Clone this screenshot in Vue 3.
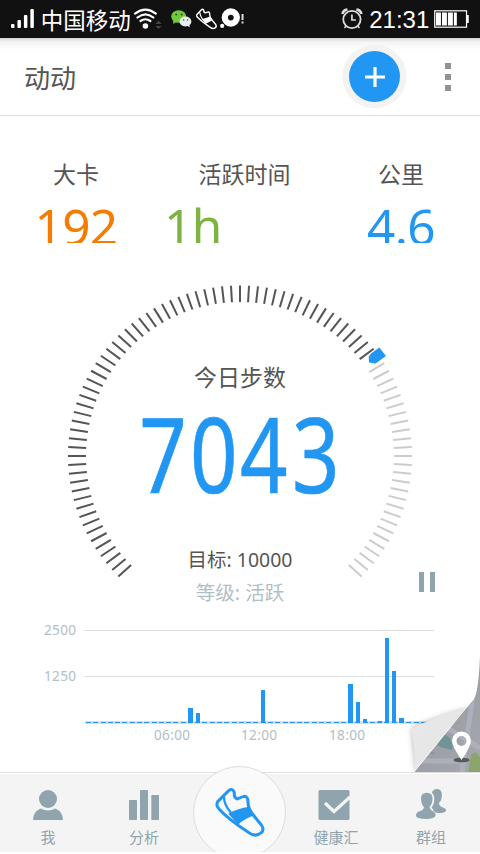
<script setup>
const stats = [
  { label: '大卡', value: '192', tone: 'orange' },
  { label: '活跃时间', value: '1h', tone: 'green' },
  { label: '公里', value: '4.6', tone: 'blue' },
]

const ticks = Array.from({ length: 91 }, (_, i) => {
  const deg = 225 - i * 3
  const a = (deg * Math.PI) / 180
  const c = Math.cos(a)
  const s = Math.sin(a)
  return { x1: 180 + 154 * c, y1: 176 - 154 * s, x2: 180 + 172 * c, y2: 176 - 170.5 * s, deg }
}).filter((t) => t.deg !== 36)

const dashes = Array.from({ length: 48 }, (_, i) => Math.round(86 + i * 7.28))

const bars = [
  { x: 188, w: 5, h: 15 },
  { x: 196, w: 4, h: 10 },
  { x: 261, w: 4, h: 33 },
  { x: 348, w: 5, h: 39 },
  { x: 356, w: 4, h: 21 },
  { x: 363, w: 4, h: 4 },
  { x: 378, w: 4, h: 2 },
  { x: 385, w: 4, h: 85 },
  { x: 392, w: 4, h: 52 },
  { x: 399, w: 5, h: 5 },
]
</script>

<template>
  <div class="screen">
    <div class="status">
      <svg class="signal" width="24" height="20" viewBox="0 0 24 20" fill="#fff">
        <rect x="0" y="15" width="3.5" height="4" rx="1" /><rect x="6.5" y="11" width="3.5" height="8" rx="1" />
        <rect x="13" y="6" width="3.5" height="13" rx="1" /><rect x="19.5" y="0" width="3.5" height="19" rx="1" />
      </svg>
      <span class="carrier">中国移动</span>
      <svg class="tray" width="114" height="24" viewBox="134 7 114 24" fill="none">
        <g stroke="#fff" stroke-width="2.2" stroke-linecap="round">
          <path d="M136 13.5Q146.500 5.500 157 13.500M138.500 17.500Q146.500 11 154.500 17.500M141.500 21Q146.500 17.500 151.500 21" />
        </g>
        <circle cx="146.500" cy="26" r="2.800" fill="#fff" />
        <path d="M156.500 24l3.200-3.500 3.200 3.500zM156.500 26l3.200 3 3.200-3z" fill="#444" />
        <ellipse cx="180" cy="16.500" rx="7.500" ry="6.300" fill="#70cb38" />
        <path d="M174.500 20l0 4 4-2.500z" fill="#70cb38" />
        <circle cx="177.500" cy="14.500" r="1" fill="#234b16" /><circle cx="183" cy="14.500" r="1" fill="#234b16" />
        <ellipse cx="186.800" cy="21.500" rx="6" ry="5" fill="#e7edf0" /><path d="M188 25l3 2.500-.2-4z" fill="#e7edf0" />
        <circle cx="185" cy="20" r=".8" fill="#555" /><circle cx="189" cy="20" r=".8" fill="#555" />
        <g transform="translate(193 5) scale(.142)">
          <path d="M38 66L68 35Q80 23 86 37Q86 55 99 55Q108 51 119 48Q128 48 128 66Q127 88 146 107Q160 123 170 137Q180 151 169 160Q152 173 132 158Q72 118 42 87Q31 77 38 66Z" stroke="#fff" stroke-width="10" />
          <path d="M57 50Q60 76 80 105" stroke="#fff" stroke-width="8" />
          <path d="M73 101L132 80 150 107 100 133Z" fill="#fff" />
        </g>
        <circle cx="232.500" cy="17.500" r="9.200" fill="#fff" /><circle cx="232.500" cy="17.500" r="2.900" fill="#111" />
        <circle cx="223.800" cy="26" r="2.100" fill="#fff" />
        <path d="M244.300 14v6M244.300 21.500v2" stroke="#ddd" stroke-width="2" />
      </svg>
      <svg class="alarm" width="22" height="22" viewBox="343 8 22 22" fill="none" stroke="#ddd">
        <circle cx="354" cy="19.500" r="8.700" stroke-width="1.800" />
        <path d="M354 14.500v5.500h4" stroke-width="1.700" />
        <path d="M344.500 14q.5-4 5-4.500M358.500 9.500q4.500.5 5 4.500" stroke-width="2.700" />
        <path d="M348 26l-1.500 2M360 26l1.500 2" stroke-width="1.500" />
      </svg>
      <span class="clock">21:31</span>
      <svg class="battery" width="36" height="18" viewBox="0 0 36 18">
        <rect x=".75" y=".75" width="32" height="16.500" fill="none" stroke="#fff" stroke-width="1.200" />
        <rect x="33" y="5" width="2" height="8" fill="#fff" />
        <path d="M2 2.500h5v13H2zM8 2.500h5v13H8zM14 2.500h5v13h-5zM20 2.500h3v13h-3z" fill="#fff" />
      </svg>
    </div>

    <header class="topbar">
      <h1>动动</h1>
      <button class="add" aria-label="添加">
        <svg width="20" height="20" viewBox="0 0 20 20"><path d="M10 0v20M0 10h20" stroke="#fff" stroke-width="3.200" /></svg>
      </button>
      <div class="more"><i></i><i></i><i></i></div>
    </header>

    <section class="stats">
      <div v-for="s in stats" :key="s.label" class="stat" :class="s.tone">
        <span class="stat-label">{{ s.label }}</span>
        <span class="stat-value"><b>{{ s.value }}</b></span>
      </div>
    </section>

    <section class="gauge">
      <svg width="360" height="330" viewBox="0 0 360 330">
        <line v-for="t in ticks" :key="t.deg" :x1="t.x1" :y1="t.y1" :x2="t.x2" :y2="t.y2" :stroke="t.deg > 36 ? '#555' : '#ccc'" stroke-width="2" />
        <path d="M308.700 77L311 73.500L319.300 67.500L326 76L315.600 83.500L309 82.500Z" fill="#2196f3" />
        <text class="cjk" x="180" y="105.500" font-size="23" text-anchor="middle" fill="#555">今日步数</text>
        <text class="steps" transform="translate(80 213) scale(.8 1)" x="-1 62.500 125 190" y="0" fill="#2196f3">7043</text>
        <text class="cjk" x="127.500" y="287" font-size="19.500" textLength="105" lengthAdjust="spacingAndGlyphs" fill="#555">目标: 10000</text>
      </svg>
      <p class="level"><span>等级: 活跃</span></p>
      <svg class="pause" width="16" height="22" viewBox="0 0 16 22"><path d="M0 1h5v20H0zM11 1h5v20h-5z" fill="#90a4ae" /></svg>
    </section>

    <section class="chart">
      <svg width="480" height="160" viewBox="0 612 480 160">
        <path d="M84.500 630.500H434M84.500 676.500H434" stroke="#ddd" />
        <rect x="85" y="721" width="349" height="3" fill="#ddd" />
        <rect v-for="d in dashes" :key="d" :x="d" y="722" width="5" height="1" fill="#2196f3" />
        <rect v-for="b in bars" :key="b.x" :x="b.x" :y="723 - b.h" :width="b.w" :height="b.h" fill="#2196f3" />
        <g class="axis" fill="#b0bec5">
          <text x="44" y="635" textLength="32.500" lengthAdjust="spacingAndGlyphs">2500</text>
          <text x="44" y="681" textLength="32.500" lengthAdjust="spacingAndGlyphs">1250</text>
          <text x="154" y="740" textLength="36.500" lengthAdjust="spacingAndGlyphs">06:00</text>
          <text x="241" y="740" textLength="36.500" lengthAdjust="spacingAndGlyphs">12:00</text>
          <text x="329" y="740" textLength="36.500" lengthAdjust="spacingAndGlyphs">18:00</text>
        </g>
      </svg>
      <svg class="fold" width="80" height="122" viewBox="400 650 80 122">
        <defs>
          <linearGradient id="paper" x1="0" y1="0" x2="1" y2="1"><stop offset="0" stop-color="#e9e9e9" /><stop offset=".6" stop-color="#e6e6e6" /><stop offset="1" stop-color="#f4f4f4" /></linearGradient>
          <linearGradient id="ground" x1="0" y1="0" x2="1" y2="1"><stop offset="0" stop-color="#8f929a" /><stop offset="1" stop-color="#a6a8ae" /></linearGradient>
          <filter id="soft" x="-20%" y="-20%" width="140%" height="140%"><feGaussianBlur stdDeviation="2.500" /></filter>
          <clipPath id="corner"><path d="M480 656Q478.500 693 473.500 700Q468 707 462 712L414 772H480Z" /></clipPath>
        </defs>
        <path d="M411 728Q436 716 466 708L415 772Z" fill="#888" opacity=".5" filter="url(#soft)" />
        <g clip-path="url(#corner)">
          <rect x="400" y="650" width="80" height="122" fill="url(#ground)" />
          <path d="M433 739Q443 731 449 737Q454 744 452 750L440 747ZM428 752l8 1-6 1z" fill="#6f9397" />
          <path d="M473 695L462 772M412 761H466M444 726L480 748" stroke="#adb0bb" stroke-width="5" fill="none" />
          <path d="M468 772L471 755Q476 749 480 758V772Z" fill="#8da46f" />
        </g>
        <path d="M411 729Q437 716 467 707Q458 716 450 728L414 772Q416 750 411 729Z" fill="url(#paper)" />
        <path d="M466 708L414 772" stroke="#fff" stroke-width="1" opacity=".8" />
        <ellipse cx="461.500" cy="760" rx="8" ry="2.300" fill="#555a62" />
        <path fill-rule="evenodd" d="M461.500 731.500a9.500 9.500 0 0 0-9.500 9.500q0 5 9.500 19q9.500-14 9.500-19a9.500 9.500 0 0 0-9.500-9.500zm0 4.500a5 5 0 1 1 0 10a5 5 0 1 1 0-10z" fill="#fff" />
      </svg>
    </section>

    <nav class="tabs">
      <div class="tab">
        <svg width="32" height="32" viewBox="0 0 32 32" fill="#90a4ae"><circle cx="16" cy="10" r="9" /><path d="M1 31Q1 23 8.500 19.500Q16 23.500 23.500 19.500Q31 23 31 31Z" /></svg>
        <span>我</span>
      </div>
      <div class="tab">
        <svg width="32" height="32" viewBox="0 0 32 32" fill="#90a4ae"><rect x="1" y="11" width="8" height="20" rx=".8" /><rect x="12" y="1" width="8" height="30" rx=".8" /><rect x="23.300" y="6" width="7.700" height="25" rx=".8" /></svg>
        <span>分析</span>
      </div>
      <div class="tab"></div>
      <div class="tab check">
        <svg width="32" height="32" viewBox="0 0 32 32"><rect x=".5" y="1" width="31" height="30" rx="1.500" fill="#90a4ae" /><path d="M7 14L16 22.500L32 8" fill="none" stroke="#f4f4f4" stroke-width="3.200" /></svg>
        <span>健康汇</span>
      </div>
      <div class="tab group">
        <svg width="34" height="34" viewBox="0 0 34 34" fill="#90a4ae">
          <path d="M18 4Q19 0 23.500 0Q29 .5 28.500 7Q28.500 12 25.500 15Q25.500 18 29 19.500Q33.500 21 33 23Q31 26 24 25.500Q20 25 19 21.500Q18.500 20.500 17.500 20Q21 15 20.500 9Q20 6 18 4Z" />
          <path d="M12.500 4Q18.800 4 18.600 10.500Q18.200 16.500 15.500 19Q15.500 22 18.500 23.500Q22 25 22 28Q21 32 11.500 32Q1 32 1 28Q1 25 5.500 23.500Q9.500 22 9.500 19Q6.800 16.500 6.400 10.500Q6.200 4 12.500 4Z" />
        </svg>
        <span>群组</span>
      </div>
      <div class="home">
        <svg width="70" height="65" viewBox="0 0 210 195" fill="none" stroke="#2196f3" stroke-linejoin="round">
          <path d="M38 65L69 34Q81 22 88 37Q86 54 97 57Q107 52 117 49Q128 48 129 64Q128 85 145 105Q158 122 169 135Q179 149 169 158Q151 173 130 157Q69 117 42 87Q32 77 38 65Z" stroke-width="9" />
          <path d="M57 50Q57 75 78 98" stroke-width="7" />
          <path d="M70 101Q91 87 132 80L149 106Q119 116 99 134Z" fill="#2196f3" stroke="none" />
        </svg>
      </div>
    </nav>
  </div>
</template>

<style>
body { margin: 0; background: #fff; }
</style>

<style scoped>
.screen { width: 480px; height: 854px; background: #fff; display: flex; flex-direction: column; overflow: hidden; font-family: "Noto Sans", "Noto Sans CJK SC", sans-serif; color: #555; }
.status { flex: none; height: 38px; box-sizing: border-box; background: #111; display: flex; align-items: center; padding: 0 10px 0 11px; color: #fff; }
.signal { margin-right: 6px; }
.carrier { font: 22.5px/38px "Noto Sans CJK SC", sans-serif; width: 93px; white-space: nowrap; }
.alarm { margin-left: 95px; }
.clock { font: 24px/38px "Liberation Sans", sans-serif; margin: 1px 0 0 6px; width: 60px; }
.battery { margin-left: 5px; }
.topbar { flex: none; height: 78px; box-sizing: border-box; border-bottom: 1px solid #ddd; display: flex; align-items: center; padding: 0 29px 0 24px; background: linear-gradient(#d4d4d4, #f4f4f4 4px, #fff 12px); }
h1 { margin: 0; font: 26px/40px "Noto Sans CJK SC", sans-serif; flex: 1; }
.add { border: 0; padding: 0; width: 51px; height: 51px; border-radius: 50%; background: #2196f3; display: grid; place-items: center; box-shadow: 0 0 0 6.500px #f3f3f3, 0 2px 3px #aaa; margin: 0 45px 0 0; }
.more { display: flex; flex-direction: column; gap: 5px; }
.more i { width: 6px; height: 6px; background: #929292; }
.stats { flex: none; height: 127px; display: grid; grid-template-columns: 152px 185px 128px; box-sizing: border-box; padding: 38px 0 0; }
.stat { display: flex; flex-direction: column; align-items: center; }
.stat-label { font: 23px/38px "Noto Sans CJK SC", sans-serif; }
.stat-value { height: 51px; overflow: hidden; font-size: 49.500px; letter-spacing: -.6px; line-height: 69px; }
.stat-value b { display: block; font-weight: 400; }
.orange .stat-value { color: #f57c00; }
.green .stat-value { color: #7cb342; align-self: flex-start; margin-left: 12px; }
.blue .stat-value { color: #2196f3; }
.gauge { flex: none; height: 369px; position: relative; display: flex; flex-direction: column; align-items: center; box-sizing: border-box; }
.gauge > svg:first-child { margin-top: 37px; }
.cjk { font-family: "Noto Sans", "Noto Sans CJK SC", sans-serif; }
.steps { font-family: "Noto Sans", sans-serif; font-size: 104px; font-weight: 400; stroke: #2196f3; stroke-width: .6px; }
.level { margin: -29px 0 0; height: 21px; overflow: hidden; font-size: 19.500px; line-height: 23px; color: #b0bec5; }
.level span { display: block; }
.pause { position: absolute; left: 419px; top: 328px; }
.chart { flex: none; height: 160px; position: relative; }
.chart > svg { display: block; }
.axis { font-family: "Noto Sans", sans-serif; font-size: 15px; letter-spacing: .4px; }
.chart > .fold { position: absolute; right: 0; bottom: 0; }
.tabs { flex: none; height: 80px; box-sizing: border-box; background: #f4f4f4; border-top: 1px solid #ddd; box-shadow: inset 0 1px #fff; position: relative; display: grid; grid-template-columns: repeat(5, 1fr); clip-path: inset(-10px 0 0 0); }
.tab { display: flex; flex-direction: column; align-items: center; padding-top: 16px; }
.tab svg { height: 32px; }
.tab span { font: 15px/22px "Noto Sans CJK SC", sans-serif; color: #90a4ae; margin-top: 5px; }
.check svg { margin-left: -4px; }
.group { padding-right: 2px; }
.home { position: absolute; left: 193px; top: -7px; width: 91px; height: 91px; border: 1px solid #ddd; border-radius: 50%; background: #fafafa; display: grid; place-items: center; }
</style>
